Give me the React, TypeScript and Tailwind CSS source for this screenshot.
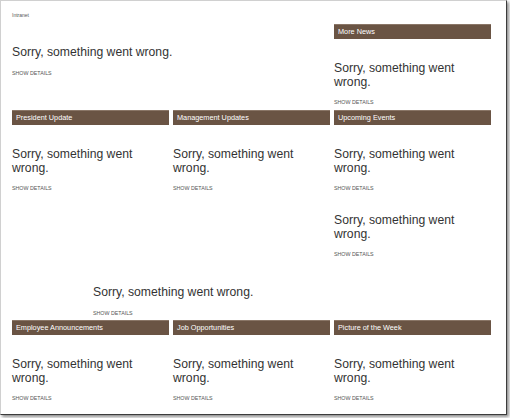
import React from "react";

// Error block shown by every web part
function ErrorBody() {
  return (
    <div>
      <p className="text-[12.2px] leading-[14px] text-[#333]">Sorry, something went wrong.</p>
      <p className="mt-[10px] text-[5.3px] leading-[7px] text-[#555] uppercase">Show details</p>
    </div>
  );
}

function WebPart({ title }: { title: string }) {
  return (
    <div>
      <div className="h-[15px] bg-[#6a5444] border-t border-[#8a7667] pl-[4px] text-[7.3px] leading-[13px] text-white">
        {title}
      </div>
      <div className="mt-[22px]">
        <ErrorBody />
      </div>
    </div>
  );
}

export default function App() {
  return (
    <div className="w-[510px] h-[418px] bg-white font-['Liberation_Sans',Arial,sans-serif]">
      <div className="w-[507px] h-[415px] border-t border-l border-[#d0d0d0] border-r border-b border-r-[#3c3c3c] border-b-[#3c3c3c] shadow-[2px_2px_3px_rgba(0,0,0,0.45)] pl-[11px] pt-[10px]">
        {/* top zone */}
        <div className="flex gap-[4px]">
          <div className="w-[318px]">
            <p className="text-[5px] leading-[8px] text-[#555]">Intranet</p>
            <div className="mt-[26px]">
              <p className="text-[12.2px] leading-[14px] text-[#333]">Sorry, something went wrong.</p>
              <p className="mt-[11px] text-[5.3px] leading-[7px] text-[#555] uppercase">Show details</p>
            </div>
          </div>
          <div className="w-[157px] mt-[13px]">
            <WebPart title="More News" />
          </div>
        </div>

        {/* middle zone */}
        <div className="grid grid-cols-[157px_157px_157px] gap-x-[4px] mt-[4px]">
          <WebPart title="President Update" />
          <WebPart title="Management Updates" />
          <div>
            <WebPart title="Upcoming Events" />
            <div className="mt-[21px]">
              <ErrorBody />
            </div>
          </div>
        </div>

        {/* orphan web part */}
        <div className="ml-[81px] mt-[27px]">
          <p className="text-[12.2px] leading-[14px] text-[#333]">Sorry, something went wrong.</p>
          <p className="mt-[11px] text-[5.3px] leading-[7px] text-[#555] uppercase">Show details</p>
        </div>

        {/* bottom zone */}
        <div className="grid grid-cols-[157px_157px_157px] gap-x-[4px] mt-[3px]">
          <WebPart title="Employee Announcements" />
          <WebPart title="Job Opportunities" />
          <WebPart title="Picture of the Week" />
        </div>
      </div>
    </div>
  );
}
